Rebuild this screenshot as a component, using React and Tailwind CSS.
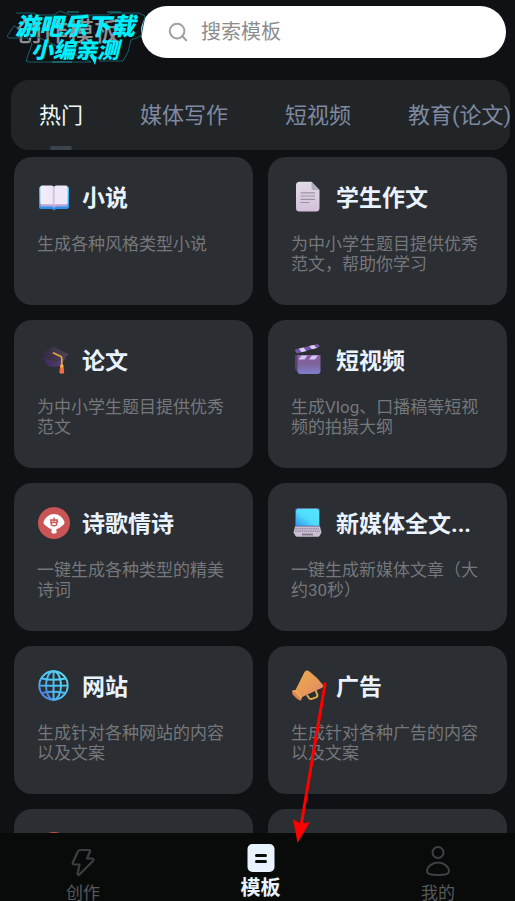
import { useState } from 'react';
import { Search } from 'lucide-react';

const BookIcon = () => (
  <svg viewBox="0 0 32 32" className="w-8 h-8 shrink-0" aria-hidden="true">
    <defs>
      <linearGradient id="bookCover" x1="0" y1="0" x2="0" y2="1">
        <stop offset="0" stopColor="#41c8e8" />
        <stop offset="1" stopColor="#2d8bea" />
      </linearGradient>
      <linearGradient id="bookPage" x1="0" y1="0" x2="1" y2="0">
        <stop offset="0" stopColor="#f3eefa" />
        <stop offset="0.85" stopColor="#efe6f6" />
        <stop offset="1" stopColor="#d5c6e2" />
      </linearGradient>
    </defs>
    <path d="M3 5.500h26a2 2 0 0 1 2 2V26a2 2 0 0 1-2 2H18l-2 1.500-2-1.500H3a2 2 0 0 1-2-2V7.500a2 2 0 0 1 2-2Z" fill="url(#bookCover)" />
    <path d="M2.500 23h27v2.500H18L16 27l-2-1.500H2.500Z" fill="#b9a5d8" />
    <path d="M4 4.500h9.500A2.500 2.500 0 0 1 16 7v17l-2-.8H3.500a1.200 1.200 0 0 1-1.200-1.200V6.200A1.700 1.700 0 0 1 4 4.500Z" fill="url(#bookPage)" />
    <path d="M28 4.500h-9.500A2.500 2.500 0 0 0 16 7v17l2-.8h10.500a1.200 1.200 0 0 0 1.200-1.200V6.200A1.700 1.700 0 0 0 28 4.500Z" fill="#efe8f8" />
    <path d="M16 6.500V24" stroke="#cdbddc" strokeWidth="1.200" />
  </svg>
);

const PaperIcon = () => (
  <svg viewBox="0 0 32 32" className="w-8 h-8 shrink-0" aria-hidden="true">
    <defs>
      <linearGradient id="paper" x1="0" y1="0" x2="0" y2="1">
        <stop offset="0" stopColor="#e2dbe8" />
        <stop offset="1" stopColor="#d3c1da" />
      </linearGradient>
    </defs>
    <path d="M7.500.8h12L27.500 9v18a3.500 3.500 0 0 1-3.500 3.500H7.500A3.500 3.500 0 0 1 4 27V4.300A3.500 3.500 0 0 1 7.500.8Z" fill="url(#paper)" />
    <path d="M19.500.8l8 8.200H21A1.500 1.500 0 0 1 19.500 7.500Z" fill="#b3aab8" />
    <path d="M8.500 11.800H23M8.500 15H23M8.500 18.300H23M8.500 21.500h9" stroke="#9b919f" strokeWidth="1.200" />
  </svg>
);

const CapIcon = () => (
  <svg viewBox="0 0 32 32" className="w-8 h-8 shrink-0" aria-hidden="true">
    <defs>
      <linearGradient id="capBase" x1="0" y1="0" x2="1" y2="0">
        <stop offset="0" stopColor="#3c2858" />
        <stop offset="1" stopColor="#58427c" />
      </linearGradient>
      <linearGradient id="capTop" x1="0" y1="0" x2="1" y2="0">
        <stop offset="0" stopColor="#30263a" />
        <stop offset="1" stopColor="#50445a" />
      </linearGradient>
    </defs>
    <path d="M4 13l5 8c4 2.500 10 2.500 14 0l5-8-12 4Z" fill="url(#capBase)" />
    <path d="M1 11L15.500 2.500 31 10.500 18 19Z" fill="url(#capTop)" />
    <path d="M15.500 9l7 3.200q1.300.6 1.300 2V23" fill="none" stroke="#e5a73b" strokeWidth="1.700" strokeLinecap="round" />
    <path d="M22 22.500a1.800 1.800 0 0 1 3.600 0l.6 6.500q-2.200 1.300-4.800 0Z" fill="#f0703e" />
    <circle cx="23.800" cy="22" r="1.700" fill="#f7b34c" />
  </svg>
);

const ClapperIcon = () => (
  <svg viewBox="0 0 32 32" className="w-8 h-8 shrink-0" aria-hidden="true">
    <defs>
      <linearGradient id="clapper" x1="0" y1="0" x2="0" y2="1">
        <stop offset="0" stopColor="#8d5fa8" />
        <stop offset="0.45" stopColor="#7f6396" />
        <stop offset="1" stopColor="#7f7fd0" />
      </linearGradient>
    </defs>
    <path d="M3 11h25v17H7q-4-1-4-4Z" fill="#574273" />
    <path d="M5.500 11H28.500v16a3 3 0 0 1-3 3H8.500a3 3 0 0 1-3-3Z" fill="url(#clapper)" />
    <path d="M3 5.500L25.500 0q1.500 0 2.200 3L5 9.500q-1.500-.5-2-4Z" fill="#7654a8" />
    <path d="M7 4.600l4.500-1.200 3 3.500-5 1.400ZM17 2.100l5-1.200 3 3-5 1.400Z" fill="#d9cff6" />
    <path d="M9.500 11.500h6l-3 4h-6ZM20 11.500h6l-3 4h-6Z" fill="#d4c6f4" />
  </svg>
);

const FanIcon = () => (
  <svg viewBox="0 0 32 32" className="w-8 h-8 shrink-0" aria-hidden="true">
    <circle cx="16" cy="16" r="16" fill="#cb5556" />
    <path d="M5.500 15Q9 7 16 7t10.500 8q.3 2-2 3.500-2 2-6.500 4 1.500 3-.2 3.800-1.800.8-3.600 0-1.700-.8-.2-3.800-4.500-2-6.500-4-2.300-1.500-2-3.500Z" fill="#fff" />
    <path d="M12 13h8M16 10.500v4M13.800 13l-1.300 3M18 13l2 2.500" fill="none" stroke="#cb5556" strokeWidth="1.400" />
    <ellipse cx="16" cy="17" rx="2.800" ry="1.700" fill="none" stroke="#cb5556" strokeWidth="1.400" />
  </svg>
);

const LaptopIcon = () => (
  <svg viewBox="0 0 32 32" className="w-8 h-8 shrink-0" aria-hidden="true">
    <defs>
      <linearGradient id="screen" x1="1" y1="0" x2="0" y2="1">
        <stop offset="0" stopColor="#54e8fb" />
        <stop offset="0.55" stopColor="#4fdcfb" />
        <stop offset="1" stopColor="#3193ee" />
      </linearGradient>
    </defs>
    <path d="M5.500 1h20a2.500 2.500 0 0 1 2.500 2.500v17H3v-17A2.500 2.500 0 0 1 5.500 1Z" fill="#625590" />
    <path d="M6.500 1.800h18A2.500 2.500 0 0 1 27 4.300v14.500H4V4.300a2.500 2.500 0 0 1 2.500-2.500Z" fill="url(#screen)" />
    <path d="M3 19.500h25l1.500 6-2 3.500a2 2 0 0 1-1.500.800H5A2 2 0 0 1 3.500 29l-2-3.500Z" fill="#c8bfd1" />
    <path d="M3.500 21.800h24M3 24.300h25" stroke="#9c90aa" strokeWidth="1.500" strokeDasharray="1.500 .7" />
    <path d="M10 27.500h11" stroke="#837689" strokeWidth="1.800" />
  </svg>
);

const GlobeIcon = () => (
  <svg viewBox="0 0 32 32" className="w-8 h-8 shrink-0" aria-hidden="true">
    <defs>
      <linearGradient id="globe" x1="1" y1="0" x2="0" y2="1">
        <stop offset="0" stopColor="#5bdcf5" />
        <stop offset="0.65" stopColor="#49b8f3" />
        <stop offset="1" stopColor="#526bdc" />
      </linearGradient>
    </defs>
    <g fill="none" stroke="url(#globe)" strokeWidth="1.900">
      <circle cx="15.500" cy="15.500" r="14.200" />
      <ellipse cx="15.500" cy="15.500" rx="7.500" ry="14.200" />
      <path d="M4 8.500q11.500 2.500 23 0M1 15.600q14 .2 29 0M4 23q11.500-2.500 23 0" />
    </g>
    <path d="M14.600 1.200h1.900v28.600h-1.900Z" fill="#4dc1f5" />
  </svg>
);

const MegaphoneIcon = () => (
  <svg viewBox="0 0 32 32" className="w-8 h-8 shrink-0" aria-hidden="true">
    <defs>
      <linearGradient id="horn" x1="0" y1="0" x2="1" y2="1">
        <stop offset="0" stopColor="#e8ad4e" />
        <stop offset="0.5" stopColor="#e89b56" />
        <stop offset="1" stopColor="#de8274" />
      </linearGradient>
    </defs>
    <path d="M15 25l2 3q1 1.500 3 .8l4-1.500q2-1 1.200-3L23.500 20" fill="none" stroke="#e5ab48" strokeWidth="1.900" />
    <path d="M3 21L12.500 2q2-2.500 5-.5 8 6 13.500 13.500.8 2.500-2 3.300L8 28Z" fill="url(#horn)" />
    <path d="M.500 22q.7-2 2.700-1l6.500 7q.3 2-1.700 2.800Q4 28.500.200 24Z" fill="#dd8852" />
    <path d="M.500 22q.7-2 2.700-1l6.500 7" fill="none" stroke="#f4b45c" strokeWidth="1.300" />
  </svg>
);

const RedDotIcon = () => (
  <svg viewBox="0 0 32 32" className="w-8 h-8 shrink-0 overflow-visible" aria-hidden="true">
    <circle cx="16" cy="15" r="16" fill="#c8503c" />
  </svg>
);

const tabs = ['热门', '媒体写作', '短视频', '教育(论文)'];

const templates = [
  { title: '小说', desc: '生成各种风格类型小说', Icon: BookIcon },
  { title: '学生作文', desc: '为中小学生题目提供优秀范文，帮助你学习', Icon: PaperIcon },
  { title: '论文', desc: '为中小学生题目提供优秀范文', Icon: CapIcon },
  { title: '短视频', desc: '生成Vlog、口播稿等短视频的拍摄大纲', Icon: ClapperIcon },
  { title: '诗歌情诗', desc: '一键生成各种类型的精美诗词', Icon: FanIcon },
  { title: '新媒体全文...', desc: '一键生成新媒体文章（大约30秒）', Icon: LaptopIcon },
  { title: '网站', desc: '生成针对各种网站的内容以及文案', Icon: GlobeIcon },
  { title: '广告', desc: '生成针对各种广告的内容以及文案', Icon: MegaphoneIcon },
  { title: '', desc: '', Icon: RedDotIcon },
  { title: '', desc: '', Icon: null },
];

const Watermark = () => (
  <div className="absolute left-[7px] top-[9px] w-[140px] h-[60px] pointer-events-none">
    <svg viewBox="0 0 140 60" className="absolute inset-0 w-full h-full" fill="none" stroke="#14616b" aria-hidden="true">
      <path d="M9 4h17l5 2h16l6-4 10 4h38l4-2h27l6 3-4 20-10 4-3 12-5 9H92M84 53H22l-3-1 6-17-5-6H2l-2-2 7-10Z" />
      <path d="M60 3h12M100 3h14M45 53h20" stroke="#1f8d98" />
      <path d="M83 46l5 10 2-8Z" fill="#00f0ff" stroke="none" />
    </svg>
    <div className="relative pl-2 pt-1.5 italic font-black text-[#00f0ff] whitespace-nowrap">
      <p className="text-[24px] leading-6">游吧乐下载</p>
      <p className="pl-4 text-[22px] leading-6">小编亲测</p>
    </div>
  </div>
);

const Header = () => (
  <header className="relative flex items-center pt-1.5 pl-4 pr-[9px]">
    <h1 className="w-[125px] shrink-0 text-[26px] leading-8 font-medium text-[#8d8f93]">创作模板</h1>
    <label className="flex flex-1 min-w-0 items-center gap-3 h-[52px] pl-[26px] pr-6 rounded-full bg-white">
      <Search className="w-[22px] h-[22px] shrink-0 text-[#a0a0a0]" strokeWidth={2.2} />
      <input
        type="text"
        aria-label="搜索模板"
        placeholder="搜索模板"
        className="w-full min-w-0 text-[20px] leading-7 text-gray-800 placeholder:text-[#8c8c8c] outline-none"
      />
    </label>
    <Watermark />
  </header>
);

const TemplateCard = ({ title, desc, Icon }) => (
  <article className="h-[148px] rounded-[18px] bg-[#2b2e32] pt-6 px-[23px]">
    <div className="flex items-start gap-3 h-8 pl-px">
      {Icon && <Icon />}
      <h2 className="text-[23px] leading-9 font-bold text-[#e9f3ff] whitespace-nowrap">{title}</h2>
    </div>
    <p className="mt-[21px] text-[17px] leading-5 text-[#75777b]">{desc}</p>
  </article>
);

const BottomNav = () => (
  <nav className="flex justify-between h-[68px] shrink-0 pl-14 pr-[50px] bg-[#090b0a] overflow-hidden">
    <a href="#create" className="flex flex-col items-center w-[54px] pt-3.5 text-[#58595b]">
      <svg viewBox="0 0 24 30" className="w-6 h-[30px] shrink-0" fill="none" stroke="#3d3e40" strokeWidth="2.2" strokeLinejoin="round" aria-hidden="true">
        <path d="M9 3h9q1.500 0 1 1.500L16 11.500h5q2.500.5 1 2.500L8.500 27.500q-1.500 1-2-.5L8.500 17.500H3.500Q1 17.500 2 15L7 4.200Q7.700 3 9 3Z" />
      </svg>
      <span className="text-[17px] leading-8">创作</span>
    </a>
    <a href="#templates" aria-current="page" className="flex flex-col items-center w-[54px] pt-[11px] text-[#e9f3ff]">
      <svg viewBox="0 0 28 28" className="w-7 h-7 shrink-0" aria-hidden="true">
        <rect x="0.500" y="0" width="27" height="28" rx="5" fill="#e9f3ff" />
        <path d="M9.500 11.500h9M9.500 17.500h9" stroke="#090b0a" strokeWidth="3" strokeLinecap="round" />
      </svg>
      <span className="text-[20px] leading-8 font-bold">模板</span>
    </a>
    <a href="#mine" className="flex flex-col items-center w-[54px] pt-3 text-[#58595b]">
      <svg viewBox="0 0 26 32" className="w-[26px] h-8 shrink-0" fill="none" stroke="#404143" strokeWidth="2" aria-hidden="true">
        <circle cx="13" cy="7.500" r="5.500" />
        <path d="M13 17.500c6 0 11 4.500 11 9 0 2.500-5 3.500-11 3.500S2 29 2 26.500c0-4.500 5-9 11-9Z" />
      </svg>
      <span className="text-[17px] leading-8">我的</span>
    </a>
  </nav>
);

const App = () => {
  const [activeTab, setActiveTab] = useState('热门');

  return (
    <div className="relative flex flex-col h-screen overflow-hidden bg-[#101115] font-[Roboto,'Noto_Sans_CJK_SC',sans-serif]">
      <Header />

      {/* Category tabs */}
      <div className="flex gap-[57px] h-[70px] shrink-0 mt-[22px] ml-[11px] mr-[5px] pl-7 rounded-[18px] bg-[#212527] overflow-hidden">
        {tabs.map((tab) => (
          <button
            key={tab}
            type="button"
            onClick={() => setActiveTab(tab)}
            className={`relative shrink-0 pt-0.5 text-[22px] leading-8 whitespace-nowrap ${
              activeTab === tab ? 'text-[#f0faf8]' : 'text-[#7f89a1]'
            }`}
          >
            {tab}
            {activeTab === tab && (
              <span className="absolute bottom-0 left-1/2 -translate-x-1/2 w-[22px] h-1 rounded-full bg-[#3b434b]" />
            )}
          </button>
        ))}
      </div>

      <main className="flex-1 min-h-0 overflow-hidden mt-[7px] pl-3.5 pr-2">
        <div className="grid grid-cols-2 gap-[15px]">
          {templates.map((item, i) => (
            <TemplateCard key={i} {...item} />
          ))}
        </div>
      </main>

      <BottomNav />

      {/* Pointer to the templates tab */}
      <svg viewBox="0 0 40 168" className="absolute left-[290px] bottom-[55px] w-10 h-[168px] pointer-events-none" aria-hidden="true">
        <path d="M35 6L11 148" stroke="#fe0000" strokeWidth="3" strokeLinecap="round" />
        <path d="M7.500 165L3 141l8 5 9-2Z" fill="#fe0000" />
      </svg>
    </div>
  );
};

export default App;
